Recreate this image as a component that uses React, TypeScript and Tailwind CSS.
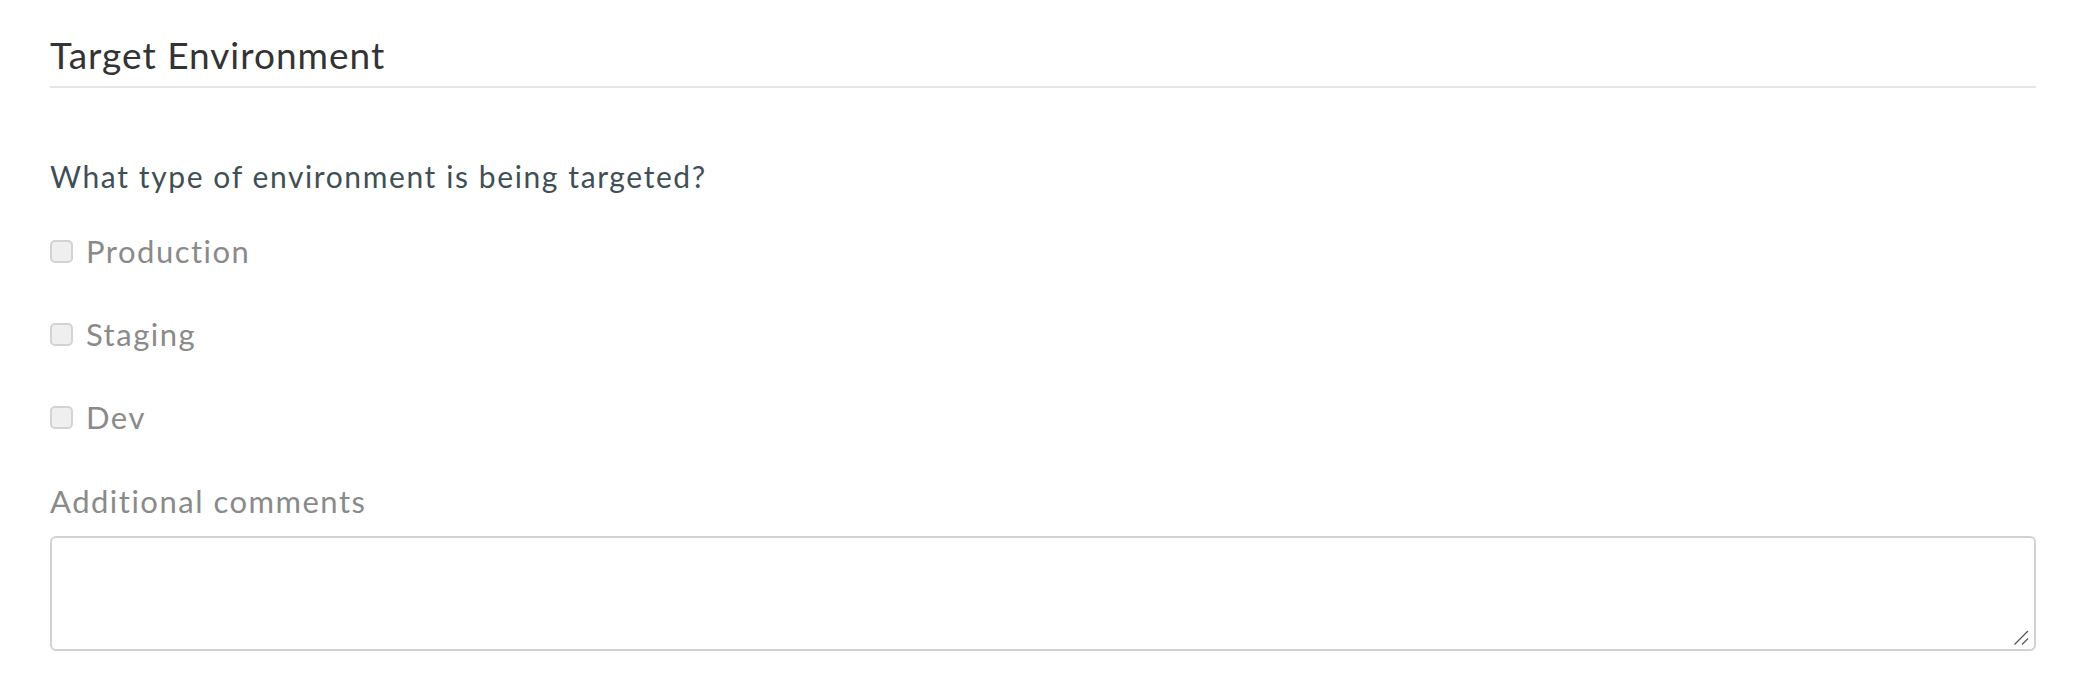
const options = ["Production", "Staging", "Dev"];

const App = () => {
  return (
    <div className="min-h-screen bg-white px-[50px] pt-[33px] font-['Lato',sans-serif]">
      <h2 className="border-b-2 border-[#e6e6e6] pb-[9px] text-[37px] leading-[44px] tracking-[1px] text-[#333333]">
        Target Environment
      </h2>

      <div className="mt-[70px] flex flex-col">
        <p className="text-[30px] leading-[36px] tracking-[1.6px] text-[#3f4f56]">
          What type of environment is being targeted?
        </p>

        <div className="mt-[39px] flex flex-col gap-[47px]">
          {options.map((opt) => (
            <label
              key={opt}
              className="flex items-center gap-[13px] text-[31px] leading-[36px] tracking-[1.5px] text-[#8a8a8a]"
            >
              <input
                type="checkbox"
                className="h-[23px] w-[23px] shrink-0 appearance-none rounded-[5px] border-2 border-[#d3d3d3] bg-[#efefef]"
              />
              {opt}
            </label>
          ))}
        </div>

        <label className="mt-[48px] text-[31px] leading-[36px] tracking-[1.5px] text-[#8a8a8a]">
          Additional comments
        </label>
        <div className="relative mt-[17px]">
          <textarea className="block h-[115px] w-full resize-none rounded-[6px] border-2 border-[#d2d2d2] bg-white px-3 py-2 text-[26px] outline-none" />
          {/* resize grip */}
          <svg
            className="pointer-events-none absolute bottom-[6px] right-[7px]"
            width="15"
            height="15"
            viewBox="0 0 15 15"
          >
            <line x1="0.5" y1="14.5" x2="14" y2="1" stroke="#555" strokeWidth="1.3" />
            <line x1="8" y1="14.5" x2="14" y2="8.5" stroke="#555" strokeWidth="1.3" />
          </svg>
        </div>
      </div>
    </div>
  );
};

export default App;
